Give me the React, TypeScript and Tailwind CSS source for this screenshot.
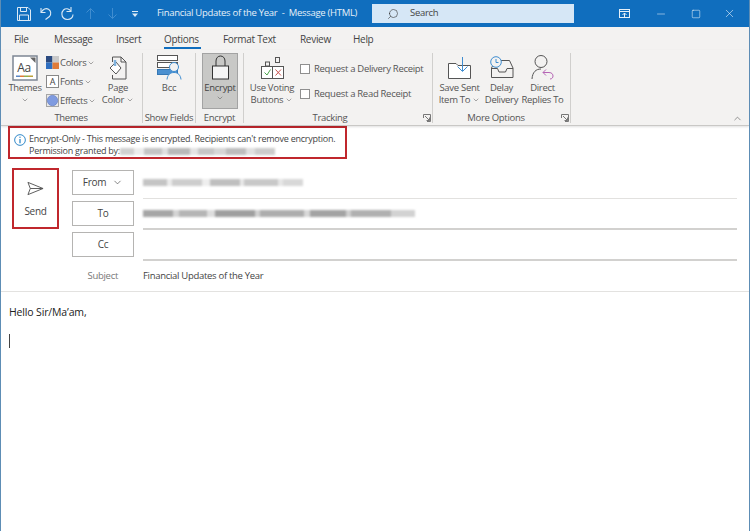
import { ChevronDown, ChevronUp, Search, X, Minus, Square } from "lucide-react";
import { ReactNode } from "react";

function Caret() {
  return <ChevronDown size={8} strokeWidth={1.5} className="inline-block text-[#555]" />;
}

function Launcher() {
  return (
    <svg width="8" height="8" viewBox="0 0 8 8" className="absolute right-[1px] bottom-[1px]" fill="none" stroke="#777" strokeWidth="1">
      <path d="M.5 4V.5H7.5V7.5H4" />
      <path d="M2 2L6.5 6.5M6.5 3.5V6.5H3.5" />
    </svg>
  );
}

function Group({ w, label, labelClass, launcher, children }: { w: string; label: string; labelClass?: string; launcher?: boolean; children: ReactNode }) {
  return (
    <div className={`relative flex h-[70px] shrink-0 flex-col border-r border-[#d0cfcd] ${w}`}>
      <div className="flex min-h-0 flex-1">{children}</div>
      <div className={`h-[10px] text-center text-[9.5px] leading-[10px] text-[#555] ${labelClass ?? ""}`}>{label}</div>
      {launcher && <Launcher />}
    </div>
  );
}

function BigButton({ w, icon, lines }: { w: string; icon: ReactNode; lines: ReactNode[] }) {
  return (
    <div className={`flex shrink-0 flex-col items-center text-[9.5px] leading-[12px] text-[#555] ${w}`}>
      <div className="flex h-[27px] items-center justify-center">{icon}</div>
      <div className="mt-[2px] whitespace-nowrap">{lines[0]}</div>
      <div className="whitespace-nowrap">{lines[1]}</div>
    </div>
  );
}

// smudged out addresses, drawn as uneven grey blocks
function Blurred({ parts }: { parts: [number, string][] }) {
  return (
    <span className="flex h-[7px] shrink-0 items-center blur-[1.2px]">
      {parts.map(([width, color], i) => (
        <span key={i} className="block h-full" style={{ width, backgroundColor: color }} />
      ))}
    </span>
  );
}

function AddressButton({ children }: { children: ReactNode }) {
  return (
    <div className="flex h-[25px] w-[62px] items-center justify-center gap-[6px] border border-[#b5b4b2] bg-white text-[10px] text-[#444]">
      {children}
    </div>
  );
}

const permissionBlur: [number, string][] = [
  [14, "#d0d0d0"], [10, "#ececec"], [18, "#c4c4c4"], [6, "#dfdfdf"], [22, "#b8b8b8"], [8, "#e4e4e4"],
  [16, "#c6c6c6"], [12, "#d6d6d6"], [20, "#bdbdbd"], [9, "#e0e0e0"], [20, "#cccccc"],
];

const fromBlur: [number, string][] = [
  [24, "#c4c4c4"], [5, "#ebebeb"], [30, "#cdcdcd"], [8, "#eeeeee"], [30, "#bfbfbf"], [4, "#e8e8e8"],
  [34, "#c8c8c8"], [5, "#e6e6e6"], [20, "#d8d8d8"],
];

const toBlur: [number, string][] = [
  [30, "#a6a6a6"], [6, "#d4d4d4"], [28, "#b5b5b5"], [8, "#dddddd"], [40, "#9f9f9f"], [5, "#d0d0d0"],
  [44, "#adadad"], [6, "#d8d8d8"], [36, "#a3a3a3"], [5, "#cfcfcf"], [40, "#b0b0b0"], [24, "#d2d2d2"],
];

export default function App() {
  return (
    <div className="flex h-[531px] w-[750px] flex-col overflow-hidden border-x border-[#5d8db5] bg-white font-['Open_Sans',sans-serif] tracking-[-0.3px] text-[#444]">
      {/* TITLE BAR */}
      <div className="flex h-[27px] shrink-0 items-center bg-[#106ebe] text-white">
        <div className="ml-[16px] flex items-center gap-[7px]">
          <svg width="14" height="14" viewBox="0 0 14 14" fill="none" stroke="#dbe9f5" strokeWidth="1">
            <path d="M.5 .5H11L13.5 3V13.5H.5Z" />
            <path d="M3.5 .5V4.5H9.5V.5M2.5 13.5V8H11.5V13.5" />
          </svg>
          <svg width="15" height="15" viewBox="0 0 15 15" fill="none" stroke="#dbe9f5" strokeWidth="1.1">
            <path d="M3 2V6.5H7.5" />
            <path d="M3.2 6.3C5 3 8 1.8 10.5 3.2C13 4.6 13.5 8 11.5 10.5L7.5 13.5" />
          </svg>
          <svg width="15" height="15" viewBox="0 0 15 15" fill="none" stroke="#dbe9f5" strokeWidth="1.1">
            <path d="M11 1V5.5H6.5" />
            <path d="M10.8 5C9 2.5 5.5 2 3.5 4C1.2 6.3 1.5 10 3.5 12C5.5 14 9.5 14 11.5 12C12.5 11 13 10 13 8.5" />
          </svg>
          <svg width="13" height="13" viewBox="0 0 13 13" fill="none" stroke="#3f8dd0" strokeWidth="1" className="ml-[2px]">
            <path d="M6.5 12V1.5M2.5 5.5L6.5 1.5L10.5 5.5" />
          </svg>
          <svg width="13" height="13" viewBox="0 0 13 13" fill="none" stroke="#3f8dd0" strokeWidth="1" className="ml-[2px]">
            <path d="M6.5 1V11.5M2.5 7.5L6.5 11.5L10.5 7.5" />
          </svg>
          <svg width="8" height="8" viewBox="0 0 8 8" fill="#dbe9f5" className="ml-[5px]">
            <rect x="1" y="1" width="6" height="1" />
            <path d="M1 3.5H7L4 7Z" />
          </svg>
        </div>
        <div className="ml-[18px] w-[215px] whitespace-pre text-[9.5px] text-[#e6f0f8]">Financial Updates of the Year  -  Message (HTML)</div>
        <div className="flex h-[19px] w-[202px] items-center bg-[#d6e7f6] text-[9.5px] text-[#444]">
          <Search size={12} strokeWidth={1.2} className="ml-[15px] -scale-x-100 text-[#333]" />
          <span className="ml-[11px]">Search</span>
        </div>
        <div className="ml-auto flex items-center">
          <svg width="12" height="10" viewBox="0 0 12 10" fill="none" stroke="#e6f0f8" strokeWidth="1" className="mr-[24px]">
            <rect x=".5" y=".5" width="10" height="8" />
            <path d="M.5 2.5H10.5M5.5 8V4M3.5 6L5.5 4L7.5 6" />
          </svg>
          <Minus size={12} strokeWidth={1} className="mr-[24px] text-white" />
          <Square size={10} strokeWidth={1.2} className="mr-[22px] text-white" />
          <X size={13} strokeWidth={1} className="mr-[13px] text-white" />
        </div>
      </div>

      {/* TABS */}
      <div className="flex h-[23px] shrink-0 items-center bg-[#f3f2f1] pl-[13px] pt-[2px] text-[10px] text-[#444]">
        <span className="w-[40px]">File</span>
        <span className="w-[62px]">Message</span>
        <span className="w-[48px]">Insert</span>
        <span className="relative w-[59px]">
          Options
          <span className="absolute -bottom-[2px] left-0 h-[2px] w-[37px] bg-[#106ebe]" />
        </span>
        <span className="w-[77px]">Format Text</span>
        <span className="w-[53px]">Review</span>
        <span>Help</span>
      </div>

      {/* RIBBON */}
      <div className="relative flex h-[76px] shrink-0 items-start border-b border-[#c9c8c6] bg-[#f3f2f1] pl-[3px] pt-[3px] shadow-[0_1px_2px_rgba(0,0,0,0.12)]">
        <Group w="w-[139px]" label="Themes" labelClass="pr-[4px]">
          <BigButton
            w="w-[42px]"
            icon={
              <svg width="26" height="26" viewBox="0 0 26 26" className="mt-[2px]">
                <rect x="1" y="1" width="24" height="24" fill="#fff" stroke="#7d8794" strokeWidth="1.5" />
                <path d="M18 2.5H23.5V8Z" fill="#666" />
                <text x="12" y="17" textAnchor="middle" fontSize="12" fill="#444">Aa</text>
                <rect x="4" y="20.5" width="4" height="1.5" fill="#5b86c4" />
                <rect x="8" y="20.5" width="4" height="1.5" fill="#e07b39" />
                <rect x="12" y="20.5" width="4" height="1.5" fill="#8fb04f" />
                <rect x="16" y="20.5" width="5" height="1.5" fill="#b9a13c" />
              </svg>
            }
            lines={["Themes", <Caret />]}
          />
          <div className="mt-[3px] flex w-[57px] flex-col gap-[6px] text-[9.5px] leading-[13px] text-[#555]">
            <div className="flex items-center gap-[1px]">
              <svg width="13" height="13" viewBox="0 0 13 13">
                <rect width="6.5" height="6.5" fill="#2b4a80" />
                <rect x="6.5" width="6.5" height="6.5" fill="#c9c9c9" />
                <rect y="6.5" width="6.5" height="6.5" fill="#2f6fc0" />
                <rect x="6.5" y="6.5" width="6.5" height="6.5" fill="#e07b39" />
              </svg>
              Colors <Caret />
            </div>
            <div className="flex items-center gap-[1px]">
              <span className="flex h-[13px] w-[13px] items-center justify-center border border-[#888] bg-white text-[9px] leading-none text-[#444]">A</span>
              Fonts <Caret />
            </div>
            <div className="flex items-center gap-[1px]">
              <svg width="13" height="13" viewBox="0 0 13 13">
                <rect x=".5" y=".5" width="12" height="12" fill="#e8e8e8" stroke="#a5a5a5" />
                <circle cx="6.5" cy="6.5" r="5.2" fill="#7f9be0" stroke="#6078c0" strokeWidth=".6" />
              </svg>
              Effects <Caret />
            </div>
          </div>
          <BigButton
            w="w-[30px]"
            icon={
              <svg width="18" height="24" viewBox="0 0 18 24" fill="none" stroke="#555" strokeWidth="1" className="mt-[2px]">
                <path d="M3.5 6V1H12L17 6V23H3.5V19" />
                <path d="M12 1V6H17" />
                <path d="M1 12L7 6L12 12L7 18Z" fill="#fff" />
                <path d="M6 4V10" stroke="#7fb2de" strokeWidth="2.5" />
              </svg>
            }
            lines={["Page", <span>Color <Caret /></span>]}
          />
        </Group>

        <Group w="w-[53px]" label="Show Fields">
          <BigButton
            w="w-full"
            icon={
              <svg width="25" height="25" viewBox="0 0 25 25" fill="none" stroke="#555" strokeWidth="1" className="mt-[2px]">
                <rect x=".5" y=".5" width="20" height="5" fill="#fff" />
                <rect x=".5" y="7.5" width="20" height="5" fill="#fff" />
                <rect x=".5" y="14.5" width="20" height="5" fill="#4a90d0" stroke="#3578b5" />
                <circle cx="17" cy="12" r="4.5" fill="#f3f2f1" stroke="#3f8dd0" />
                <path d="M10 24.5C10.5 20 13 17.5 17 17.5C21 17.5 23.5 20 24 24.5" fill="#f3f2f1" stroke="#3f8dd0" />
              </svg>
            }
            lines={["Bcc", ""]}
          />
        </Group>

        <Group w="w-[48px]" label="Encrypt">
          <div className="ml-[6px] flex h-[56px] w-[36px] flex-col items-center border border-[#a3a3a3] bg-[#c8c8c6] text-[9.5px] leading-[12px] text-[#444]">
            <svg width="17" height="25" viewBox="0 0 17 25" fill="none" stroke="#333" strokeWidth="1" className="mt-[1px]">
              <path d="M4 11V6C4 3 6 1 8.5 1C11 1 13 3 13 6V11" />
              <rect x=".5" y="11" width="16" height="13" fill="#f5f5f5" />
            </svg>
            <div className="mt-[2px]">Encrypt</div>
            <Caret />
          </div>
        </Group>

        <Group w="w-[189px]" label="Tracking" labelClass="pr-[16px]" launcher>
          <BigButton
            w="w-[56px]"
            icon={
              <svg width="23" height="22" viewBox="0 0 23 22" fill="none" stroke="#555" strokeWidth="1" className="mt-[3px]">
                <rect x="4.5" y="5" width="4" height="4" />
                <rect x="14.5" y=".5" width="4" height="5" />
                <rect x=".5" y="9.5" width="22" height="12" fill="#fff" />
                <path d="M11.5 9.5V21.5" />
                <path d="M3.5 15.5L6 18L9.5 12.5" stroke="#4ca64c" />
                <path d="M14.5 12.5L20 18.5M20 12.5L14.5 18.5" stroke="#c8524f" />
              </svg>
            }
            lines={["Use Voting", <span>Buttons <Caret /></span>]}
          />
          <div className="flex flex-col gap-[12px] pt-[9px] text-[9.5px] leading-[13px] text-[#555]">
            <label className="flex items-center gap-[4px] whitespace-nowrap">
              <span className="h-[10px] w-[10px] border border-[#8f8f8f] bg-white" />
              Request a Delivery Receipt
            </label>
            <label className="flex items-center gap-[4px] whitespace-nowrap">
              <span className="h-[10px] w-[10px] border border-[#8f8f8f] bg-white" />
              Request a Read Receipt
            </label>
          </div>
        </Group>

        <Group w="w-[138px]" label="More Options" labelClass="pr-[11px]" launcher>
          <BigButton
            w="w-[49px] ml-[2px]"
            icon={
              <svg width="23" height="22" viewBox="0 0 23 22" fill="none" stroke="#555" strokeWidth="1" className="mt-[2px]">
                <path d="M.5 6.5H8L10 8.5H22.5V21.5H.5Z" fill="#fff" />
                <path d="M14.5 0V14M9.5 9.5L14.5 14.5L19.5 9.5" stroke="#3f8dd0" />
              </svg>
            }
            lines={["Save Sent", <span>Item To <Caret /></span>]}
          />
          <BigButton
            w="w-[35px]"
            icon={
              <svg width="24" height="23" viewBox="0 0 24 23" fill="none" stroke="#555" strokeWidth="1" className="mt-[1px]">
                <path d="M7 4.5H19.5L23 12V21.5H1.5V12L3 9" />
                <path d="M1.5 12.5H7.5L9 16H15.5L17 12.5H23" />
                <circle cx="6" cy="6" r="5.3" fill="#f3f2f1" stroke="#3f8dd0" />
                <path d="M6 3V6.5H8.5" stroke="#3f8dd0" />
              </svg>
            }
            lines={["Delay", "Delivery"]}
          />
          <BigButton
            w="w-[47px]"
            icon={
              <svg width="23" height="25" viewBox="0 0 23 25" fill="none" stroke="#555" strokeWidth="1" className="mt-[2px]">
                <circle cx="10" cy="6.5" r="6" />
                <path d="M1 24C1.5 17 5 14 10 14" />
                <path d="M12 17.5L15 14.5M12 17.5L15 20.5M12 17.5H18C21 17.5 22 19.5 22 21C22 22.5 21 24 19 24" stroke="#b565b5" />
              </svg>
            }
            lines={["Direct", "Replies To"]}
          />
        </Group>
        <ChevronUp size={11} strokeWidth={1.3} className="absolute right-[6px] bottom-[1px] text-[#555]" />
      </div>

      {/* INFO BAR */}
      <div className="ml-[7px] flex h-[33px] w-[339px] shrink-0 items-start gap-[3px] border-2 border-[#c0272d] pl-[4px] pt-[5px]">
        <svg width="12" height="12" viewBox="0 0 13 13" fill="none" stroke="#1f7fc4" className="mt-[1px] shrink-0">
          <circle cx="6.5" cy="6.5" r="5.8" />
          <path d="M6.5 5.5V10" strokeWidth="1.3" />
          <circle cx="6.5" cy="3.5" r=".7" fill="#1f7fc4" stroke="none" />
        </svg>
        <div className="text-[9px] leading-[12px] tracking-[-0.25px] text-[#444]">
          <div className="whitespace-nowrap">Encrypt-Only - This message is encrypted. Recipients can't remove encryption.</div>
          <div className="flex items-center whitespace-nowrap">
            Permission granted by:
            <Blurred parts={permissionBlur} />
          </div>
        </div>
      </div>

      {/* HEADER */}
      <div className="flex h-[133px] shrink-0 border-b border-[#e3e2e0]">
        <div className="ml-[11px] mt-[9px] flex h-[61px] w-[47px] flex-col items-center border-2 border-[#c0272d] pt-[11px] text-[10px] text-[#444]">
          <svg width="17" height="15" viewBox="0 0 18 15" fill="none" stroke="#555" strokeWidth="1">
            <path d="M1 1L17 7.5L1 14L3.5 7.5Z" />
            <path d="M3.5 7.5H17" />
          </svg>
          <span className="mt-[8px]">Send</span>
        </div>
        <div className="ml-[13px] mt-[11px] flex w-[62px] flex-col gap-[6px]">
          <AddressButton>
            From <ChevronDown size={11} strokeWidth={1.4} />
          </AddressButton>
          <AddressButton>To</AddressButton>
          <AddressButton>Cc</AddressButton>
          <div className="mt-[6px] pr-[16px] text-right text-[9.5px] leading-[13px] text-[#777]">Subject</div>
        </div>
        <div className="ml-[9px] mt-[9px] w-[594px]">
          <div className="flex h-[31px] items-center border-b border-[#e2e1df] pb-[2px]">
            <Blurred parts={fromBlur} />
          </div>
          <div className="flex h-[31px] items-center border-b-2 border-[#d2d1cf]">
            <Blurred parts={toBlur} />
          </div>
          <div className="h-[31px] border-b-2 border-[#d2d1cf]" />
          <div className="mt-[8px] text-[9.5px] leading-[13px] text-[#444]">Financial Updates of the Year</div>
        </div>
      </div>

      {/* BODY */}
      <div className="flex-1 pl-[8px] pt-[13px] text-[10.5px] leading-[14px] tracking-[-0.15px] text-[#222]">
        <div>Hello Sir/Ma’am,</div>
        <div className="mt-[15px] h-[14px] w-px bg-[#444]" />
      </div>
    </div>
  );
}
